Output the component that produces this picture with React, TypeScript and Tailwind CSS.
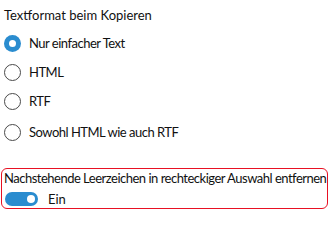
const options = ["Nur einfacher Text", "HTML", "RTF", "Sowohl HTML wie auch RTF"];

function Radio({ checked }: { checked: boolean }) {
  return checked ? (
    <span className="w-[17px] h-[17px] rounded-full bg-[#2a8ccf] flex items-center justify-center shrink-0">
      <span className="w-[7px] h-[7px] rounded-full bg-white" />
    </span>
  ) : (
    <span className="w-[17px] h-[17px] rounded-full border border-[#4a4a4a] shrink-0" />
  );
}

export default function App() {
  return (
    <div
      className="w-[331px] h-[216px] bg-white text-[#111111] text-[13px] leading-none pl-[4px] pt-[8px] whitespace-nowrap"
      style={{ fontFamily: 'Lato, "Noto Sans", sans-serif' }}
    >
      <div className="h-[14px] flex items-center">Textformat beim Kopieren</div>
      <div className="mt-[7px] flex flex-col tracking-[-0.5px]">
        {options.map((o, i) => (
          <div
            key={o}
            className={`h-[29px] flex items-center gap-[8px] ${i === 3 ? "mt-[2px]" : ""}`}
          >
            <Radio checked={i === 0} />
            <span>{o}</span>
          </div>
        ))}
      </div>
      <div className="mt-[21px] -ml-[3px] w-[327px] h-[41px] border border-[#e81123] rounded-[6px] pl-[2px] pt-[2px]">
        <div className="h-[14px] flex items-center tracking-[-0.5px]">
          Nachstehende Leerzeichen in rechteckiger Auswahl entfernen
        </div>
        <div className="mt-[7px] flex items-center gap-[10px] pl-[1px]">
          <span className="w-[33px] h-[14px] rounded-full bg-[#2a8ccf] flex items-center justify-end pr-[3px]">
            <span className="w-[8px] h-[8px] rounded-full bg-white" />
          </span>
          <span>Ein</span>
        </div>
      </div>
    </div>
  );
}
